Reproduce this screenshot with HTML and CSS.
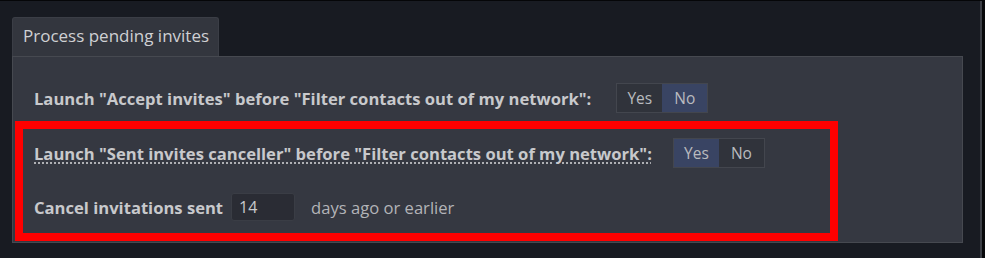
FILE: index.html
```html
<!DOCTYPE html>
<html>
<head>
<meta charset="utf-8">
<link rel="stylesheet" href="styles.css">
</head>
<body>
<div class="page">
  <div class="content">
    <div class="tab">Process pending invites</div>
    <div class="panel">
      <div class="row row-first">
        <span class="label">Launch "Accept invites" before "Filter contacts out of my network":</span>
        <div class="toggle">
          <span class="opt">Yes</span>
          <span class="opt active">No</span>
        </div>
      </div>
      <div class="highlight">
        <div class="row">
          <span class="label dotted">Launch "Sent invites canceller" before "Filter contacts out of my network":</span>
          <div class="toggle">
            <span class="opt active">Yes</span>
            <span class="opt">No</span>
          </div>
        </div>
        <div class="row row-days">
          <span class="label">Cancel invitations sent</span>
          <input class="days" type="text" value="14">
          <span class="suffix">days ago or earlier</span>
        </div>
      </div>
    </div>
  </div>
  <div class="edge"></div>
  <div class="edge-dark"></div>
</div>
</body>
</html>
```
FILE: styles.css
```css
html, body {
  margin: 0;
  padding: 0;
  background: #181b22;
}
body {
  font-family: "Open Sans", "Noto Sans", sans-serif;
  color: #c8c9cc;
}
.page {
  display: flex;
  height: 258px;
  border-top: 1px solid #050608;
  box-sizing: border-box;
}
.content {
  flex: 1;
  padding: 16px 17px 0 12px;
}
.edge {
  width: 2px;
  background: #3b3e45;
}
.edge-dark {
  width: 3px;
  background: #07080a;
}
.tab {
  display: inline-block;
  box-sizing: border-box;
  width: 207px;
  height: 39px;
  padding: 6px 0 0 10px;
  background: #33363e;
  border: 1px solid #3b3e46;
  border-bottom: none;
  border-radius: 3px 3px 0 0;
  font-size: 17px;
  color: #cfd0d3;
  vertical-align: bottom;
}
.panel {
  box-sizing: border-box;
  height: 187px;
  background: #353841;
  border: 1px solid #464950;
  padding: 26px 0 0 2px;
}
.row {
  display: flex;
  align-items: center;
  height: 30px;
}
.row-first {
  padding-left: 19px;
  margin-bottom: 8px;
}
.label {
  font-weight: 700;
  font-size: 16.6px;
  color: #c8c9cc;
  margin-right: 25px;
}
.dotted {
  text-decoration: underline dotted #c8c9cc;
  text-underline-offset: 3px;
  margin-right: 21px;
}
.toggle {
  display: flex;
  height: 30px;
  border: 1px solid #43464e;
  box-sizing: border-box;
}
.opt {
  width: 45px;
  display: flex;
  align-items: center;
  justify-content: center;
  font-size: 15.5px;
  color: #b9bbbf;
  background: #30333b;
}
.opt.active {
  background: #394463;
}
.highlight {
  box-sizing: border-box;
  width: 823px;
  border: 8px solid #ff0000;
  padding: 9px 11px 11px;
}
.row-days {
  margin-top: 24px;
}
.row-days .label {
  margin-right: 8px;
}
.days {
  box-sizing: border-box;
  width: 64px;
  height: 28px;
  background: #2a2c34;
  border: 1px solid #3a3d45;
  border-radius: 3px;
  color: #c8c9cc;
  font-family: "Open Sans", "Noto Sans", sans-serif;
  font-size: 16px;
  padding: 0 7px;
  margin-right: 16px;
  outline: none;
}
.suffix {
  font-size: 16.6px;
  color: #b3b4b8;
}
```
